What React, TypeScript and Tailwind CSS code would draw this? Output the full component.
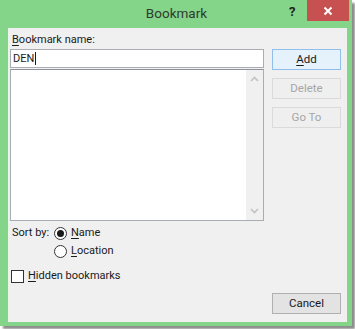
import React from 'react';

const FONT = { fontFamily: 'Roboto, "Noto Sans", "Liberation Sans", sans-serif' };

const U: React.FC<{ c: string }> = ({ c }) => <span className="underline underline-offset-[2px]">{c}</span>;

const Chevron: React.FC<{ up?: boolean }> = ({ up }) => (
    <svg width="9" height="6" viewBox="0 0 9 6" className="block">
        <path d={up ? 'M1 5 L4.5 1.5 L8 5' : 'M1 1 L4.5 4.5 L8 1'} fill="none" stroke="#c2c2c2" strokeWidth="1.6" />
    </svg>
);

const Radio: React.FC<{ checked?: boolean }> = ({ checked }) => (
    <span className="w-[13px] h-[13px] rounded-full border border-[#333] bg-white flex items-center justify-center shrink-0">
        {checked && <span className="w-[7px] h-[7px] rounded-full bg-[#1a1a1a]" />}
    </span>
);

const DialogButton: React.FC<{ children: React.ReactNode; variant?: 'default' | 'disabled' | 'normal'; className?: string }> = ({ children, variant = 'normal', className = '' }) => {
    const styles = {
        default: 'border-[#8fbfea] bg-[#e5f1fb] text-[#1a1a1a]',
        disabled: 'border-[#dadada] bg-[#efefef] text-[#a6a6a6]',
        normal: 'border-[#b0b0b0] bg-[#e3e3e3] text-[#1a1a1a]',
    }[variant];
    return (
        <div className={`w-[69px] h-[21px] border flex items-center justify-center text-[11.5px] ${styles} ${className}`}>
            {children}
        </div>
    );
};

export default function App() {
    return (
        <div className="w-[355px] h-[329px] bg-white" style={FONT}>
            <div className="w-[352px] h-[326px] bg-[#84d48a] flex flex-col shadow-[3px_3px_2px_rgba(0,0,0,0.45)]">
                {/* title bar */}
                <div className="h-[28px] relative flex items-center justify-center">
                    <span className="text-[13.5px] text-[#2e3b2f] mt-[-1px] pl-[1px]">Bookmark</span>
                    <span className="absolute left-[289px] top-[2px] text-[13px] font-bold text-[#1f1f1f]">?</span>
                    <div className="absolute left-[307px] top-0 w-[42px] h-[21px] bg-[#c75050] flex items-center justify-center">
                        <svg width="10" height="10" viewBox="0 0 10 10">
                            <path d="M1.5 1.5 L8.5 8.5 M8.5 1.5 L1.5 8.5" stroke="#fff" strokeWidth="2" />
                        </svg>
                    </div>
                </div>

                {/* client */}
                <div className="flex-1 ml-[8px] mr-[5px] mb-[4px] bg-[#f0f0f0] border-l border-[#e9f7ea] flex flex-col text-[11px] text-[#1a1a1a]">
                    <div className="flex pl-[1px]">
                        <div className="w-[254px] flex flex-col">
                            <div className="h-[21px] pl-[2px] pt-[5px] leading-[13px]">
                                <U c="B" />ookmark name:
                            </div>
                            <div className="h-[19px] border border-[#abadb3] bg-white flex items-center pl-[2px] leading-none">
                                DEN<span className="w-px h-[13px] bg-[#1a1a1a] ml-[1px]" />
                            </div>
                            <div className="mt-[1px] h-[152px] border border-[#a8acb3] border-t-[#8e939b] bg-white flex justify-end">
                                <div className="w-[17px] bg-[#f0f0f0] flex flex-col items-center justify-between py-[6px]">
                                    <Chevron up />
                                    <Chevron />
                                </div>
                            </div>
                            <div className="flex mt-[3px] pl-[2px]">
                                <div className="w-[42px] h-[18px] flex items-center whitespace-nowrap">Sort by:</div>
                                <div className="flex flex-col gap-[5px]">
                                    <div className="h-[13px] flex items-center gap-[4px] mt-[3px]">
                                        <Radio checked />
                                        <span><U c="N" />ame</span>
                                    </div>
                                    <div className="h-[13px] flex items-center gap-[4px]">
                                        <Radio />
                                        <span><U c="L" />ocation</span>
                                    </div>
                                </div>
                            </div>
                            <div className="h-[13px] flex items-center gap-[4px] mt-[12px] pl-[1px]">
                                <span className="w-[13px] h-[13px] border border-[#333] bg-white" />
                                <span><U c="H" />idden bookmarks</span>
                            </div>
                        </div>
                        <div className="flex flex-col ml-[8px] pt-[21px] gap-[8px]">
                            <DialogButton variant="default"><U c="A" />dd</DialogButton>
                            <DialogButton variant="disabled" className="h-[20px]">Delete</DialogButton>
                            <DialogButton variant="disabled" className="h-[20px]">Go To</DialogButton>
                        </div>
                    </div>
                    <div className="flex-1 flex items-end justify-end pr-[6px] pb-[8px]">
                        <DialogButton>Cancel</DialogButton>
                    </div>
                </div>
            </div>
        </div>
    );
}
